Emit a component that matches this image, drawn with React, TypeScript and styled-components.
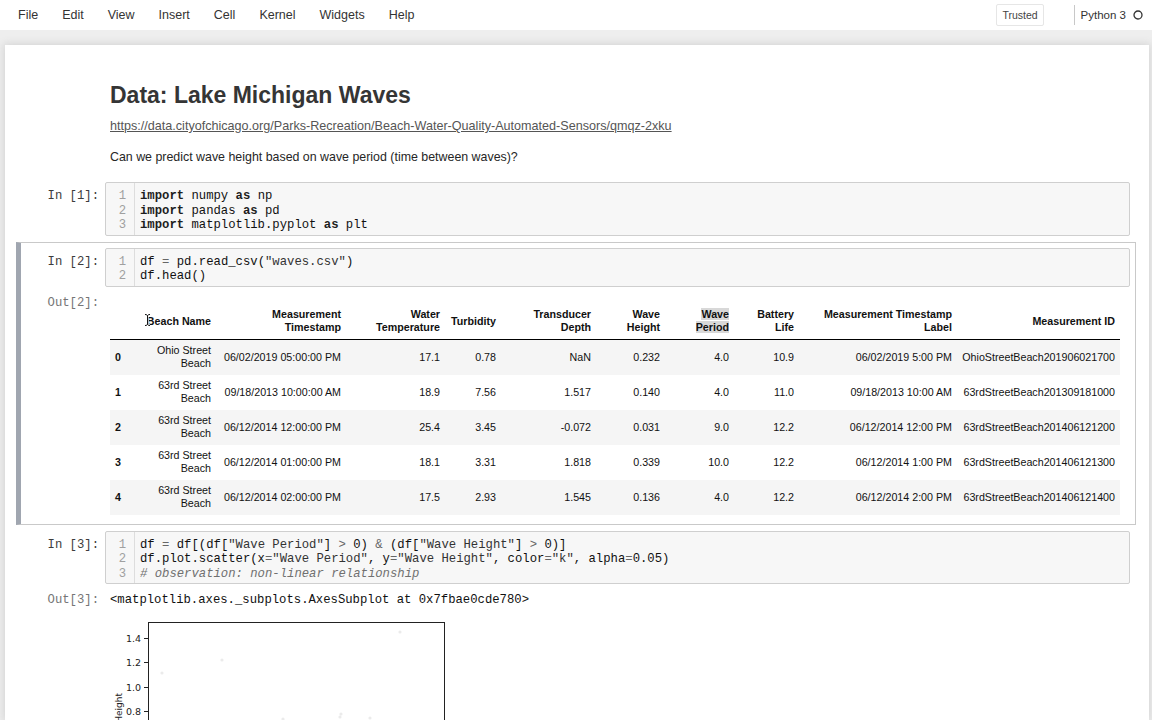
import React from 'react';
import styled, { createGlobalStyle } from 'styled-components';

const GlobalStyle = createGlobalStyle`
  html, body {
    margin: 0;
    padding: 0;
    overflow: hidden;
    background: #eeeeee;
  }
  body {
    font-family: "Liberation Sans", Arial, sans-serif;
    color: #000;
  }
`;

const MONO = `"Liberation Mono", "Courier New", monospace`;

const Page = styled.div`
  width: 1152px;
  height: 720px;
  display: flex;
  flex-direction: column;
  overflow: hidden;
`;

const Header = styled.div`
  height: 30px;
  flex: none;
  background: #fff;
  display: flex;
  align-items: center;
  padding: 0 9px 0 6px;
`;

const Menu = styled.ul`
  list-style: none;
  margin: 0;
  padding: 0;
  display: flex;
`;

const MenuItem = styled.li`
  padding: 0 12px;
  font-size: 12.5px;
  line-height: 30px;
  color: #333;
`;

const StatusArea = styled.div`
  margin-left: auto;
  display: flex;
  align-items: center;
`;

const TrustedBadge = styled.span`
  font-size: 10.5px;
  color: #444;
  border: 1px solid #e6e6e6;
  border-radius: 2px;
  padding: 4px 5px;
  margin-right: 30px;
`;

const KernelName = styled.span`
  display: flex;
  align-items: center;
  gap: 7px;
  height: 20px;
  border-left: 1px solid #c8c8c8;
  padding-left: 6px;
  font-size: 11.5px;
  color: #333;
`;

const Site = styled.div`
  flex: 1;
  min-height: 0;
  padding: 15px 3px 0 5px;
`;

const Notebook = styled.div`
  height: 100%;
  box-sizing: border-box;
  background: #fff;
  padding: 15px 13px 0 11px;
  box-shadow: 0 0 8px 1px rgba(87, 87, 87, 0.18);
`;

const Cell = styled.div<{ $selected?: boolean }>`
  border: 1px solid ${(p) => (p.$selected ? '#c9c9c9' : 'transparent')};
  border-left: ${(p) => (p.$selected ? '5px solid #a0a6b0' : '1px solid transparent')};
  padding: 5px 5px 5px ${(p) => (p.$selected ? '1px' : '5px')};
`;

const Row = styled.div`
  display: flex;
  align-items: flex-start;
`;

const Prompt = styled.div<{ $out?: boolean }>`
  width: 83px;
  flex: none;
  box-sizing: border-box;
  padding: ${(p) => (p.$out ? '9px' : '7px')} 6px 0 0;
  text-align: right;
  font-family: ${MONO};
  font-size: 12.25px;
  line-height: 14.5px;
  white-space: pre;
  color: ${(p) => (p.$out ? '#767676' : '#3c3c3c')};
`;

const MarkdownBody = styled.div`
  flex: 1;
  padding: 5px 5px 4px;
`;

const Title = styled.h1`
  margin: 11px 0 10px;
  font-size: 23px;
  line-height: 26px;
  font-weight: bold;
  color: #353535;
`;

const Paragraph = styled.p<{ $gap?: number }>`
  margin: 0 0 ${(p) => p.$gap ?? 0}px;
  font-size: 12.4px;
  line-height: 17px;
  color: #262626;
`;

const Link = styled.a`
  font-size: 12.6px;
  color: #555;
  text-decoration: underline;
`;

const InputArea = styled.div`
  flex: 1;
  display: flex;
  background: #f7f7f7;
  border: 1px solid #cfcfcf;
  border-radius: 2px;
  font-family: ${MONO};
  font-size: 12.25px;
  line-height: 14.5px;
`;

const Gutter = styled.div`
  width: 29px;
  flex: none;
  box-sizing: border-box;
  padding: 6px 8px 2px 0;
  text-align: right;
  color: #a0a0a0;
  border-right: 1px solid #dddddd;
`;

const CodeLines = styled.div`
  flex: 1;
  padding: 6px 0 2px 5px;
  color: #111;
`;

const CodeLine = styled.div`
  height: 14.5px;
  white-space: pre;
`;

const Kw = styled.span`
  font-weight: bold;
  color: #1e1e1e;
`;

const Str = styled.span`
  color: #333;
`;

const Op = styled.span`
  color: #666;
`;

const Comment = styled.span`
  font-style: italic;
  color: #707070;
`;

const OutputBody = styled.div`
  flex: 1;
  padding: 17px 0 4px 5px;
`;

const TextOutput = styled.pre`
  flex: 1;
  margin: 0;
  padding: 9px 0 0 5px;
  font-family: ${MONO};
  font-size: 12.25px;
  line-height: 14.5px;
  color: #111;
`;

const PlotOutput = styled.div`
  flex: 1;
  padding: 2px 0 0 5px;
`;

const DataTable = styled.table`
  border-collapse: collapse;
  border-spacing: 0;
  table-layout: fixed;
  width: 1010px;
  font-size: 10.7px;
  line-height: 13px;
  color: #111;
`;

const Col = styled.col<{ $w: number }>`
  width: ${(p) => p.$w}px;
`;

const HeadCell = styled.th`
  text-align: right;
  vertical-align: middle;
  padding: 4.5px 5px;
  font-weight: bold;
  border-bottom: 1px solid #000;
`;

const BodyRow = styled.tr`
  &:nth-child(odd) {
    background: #f5f5f5;
  }
`;

const IndexCell = styled.th`
  text-align: left;
  vertical-align: middle;
  padding: 4.5px 5px;
  font-weight: bold;
`;

const DataCell = styled.td`
  text-align: right;
  vertical-align: middle;
  padding: 4.5px 5px;
`;

const Selected = styled.span`
  background: #d8d8d8;
`;

const CursorHolder = styled.span`
  position: relative;
`;

const CursorMark = styled.svg`
  position: absolute;
  left: -3px;
  top: -2px;
`;

const columns = [
  { label: '', w: 30 },
  { label: 'Beach Name', w: 76 },
  { label: 'Measurement Timestamp', w: 130 },
  { label: 'Water Temperature', w: 99 },
  { label: 'Turbidity', w: 56 },
  { label: 'Transducer Depth', w: 95 },
  { label: 'Wave Height', w: 69 },
  { label: 'Wave Period', w: 69 },
  { label: 'Battery Life', w: 65 },
  { label: 'Measurement Timestamp Label', w: 158 },
  { label: 'Measurement ID', w: 163 },
];

const rows = [
  ['0', 'Ohio Street Beach', '06/02/2019 05:00:00 PM', '17.1', '0.78', 'NaN', '0.232', '4.0', '10.9', '06/02/2019 5:00 PM', 'OhioStreetBeach201906021700'],
  ['1', '63rd Street Beach', '09/18/2013 10:00:00 AM', '18.9', '7.56', '1.517', '0.140', '4.0', '11.0', '09/18/2013 10:00 AM', '63rdStreetBeach201309181000'],
  ['2', '63rd Street Beach', '06/12/2014 12:00:00 PM', '25.4', '3.45', '-0.072', '0.031', '9.0', '12.2', '06/12/2014 12:00 PM', '63rdStreetBeach201406121200'],
  ['3', '63rd Street Beach', '06/12/2014 01:00:00 PM', '18.1', '3.31', '1.818', '0.339', '10.0', '12.2', '06/12/2014 1:00 PM', '63rdStreetBeach201406121300'],
  ['4', '63rd Street Beach', '06/12/2014 02:00:00 PM', '17.5', '2.93', '1.545', '0.136', '4.0', '12.2', '06/12/2014 2:00 PM', '63rdStreetBeach201406121400'],
];

const menu = ['File', 'Edit', 'View', 'Insert', 'Cell', 'Kernel', 'Widgets', 'Help'];

function CodeCell({ prompt, lines }: { prompt: string; lines: React.ReactNode[] }) {
  return (
    <Row>
      <Prompt>{prompt}</Prompt>
      <InputArea>
        <Gutter>
          {lines.map((_, i) => (
            <CodeLine key={i}>{i + 1}</CodeLine>
          ))}
        </Gutter>
        <CodeLines>
          {lines.map((l, i) => (
            <CodeLine key={i}>{l}</CodeLine>
          ))}
        </CodeLines>
      </InputArea>
    </Row>
  );
}

function headLabel(label: string) {
  if (label === 'Wave Period') return <Selected>{label}</Selected>;
  if (label === 'Beach Name') {
    return (
      <CursorHolder>
        <CursorMark width="7" height="14" viewBox="0 0 7 14">
          <path d="M1 1.5 C2.5 1.5 3.5 2 3.5 3 V11 C3.5 12 2.5 12.5 1 12.5 M6 1.5 C4.5 1.5 3.5 2 3.5 3 M3.5 11 C3.5 12 4.5 12.5 6 12.5" fill="none" stroke="#fff" strokeWidth="2.4" />
          <path d="M1 1.5 C2.5 1.5 3.5 2 3.5 3 V11 C3.5 12 2.5 12.5 1 12.5 M6 1.5 C4.5 1.5 3.5 2 3.5 3 M3.5 11 C3.5 12 4.5 12.5 6 12.5" fill="none" stroke="#111" strokeWidth="1" />
        </CursorMark>
        {label}
      </CursorHolder>
    );
  }
  return label;
}

function Scatter() {
  const ticks = [
    { y: 28, label: '1.4' },
    { y: 52, label: '1.2' },
    { y: 77, label: '1.0' },
    { y: 101, label: '0.8' },
  ];
  const dots = [
    [52, 63], [112, 50], [290, 22], [230, 107], [173, 109], [260, 108], [231, 104], [200, 112],
  ];
  return (
    <svg width="340" height="116" viewBox="0 0 340 116">
      <rect x="38.5" y="12.5" width="296" height="200" fill="none" stroke="#222" strokeWidth="1" />
      {dots.map(([x, y], i) => (
        <circle key={i} cx={x} cy={y} r="1.6" fill="#000" opacity="0.08" />
      ))}
      {ticks.map((t) => (
        <g key={t.label}>
          <line x1="34" x2="38.5" y1={t.y + 0.5} y2={t.y + 0.5} stroke="#222" strokeWidth="1" />
          <text x="31" y={t.y + 3.5} textAnchor="end" fontSize="9.5" fontFamily="DejaVu Sans, sans-serif" fill="#222">
            {t.label}
          </text>
        </g>
      ))}
      <text transform="translate(11.5,83) rotate(-90)" textAnchor="end" fontSize="9" fontFamily="DejaVu Sans, sans-serif" fill="#222">
        Wave Height
      </text>
    </svg>
  );
}

export default function App() {
  return (
    <Page>
      <GlobalStyle />
      <Header>
        <Menu>
          {menu.map((m) => (
            <MenuItem key={m}>{m}</MenuItem>
          ))}
        </Menu>
        <StatusArea>
          <TrustedBadge>Trusted</TrustedBadge>
          <KernelName>
            Python 3
            <svg width="10" height="10" viewBox="0 0 10 10">
              <circle cx="5" cy="5" r="4" fill="none" stroke="#333" strokeWidth="1.3" />
            </svg>
          </KernelName>
        </StatusArea>
      </Header>
      <Site>
        <Notebook>
          <Cell>
            <Row>
              <Prompt />
              <MarkdownBody>
                <Title>Data: Lake Michigan Waves</Title>
                <Paragraph $gap={14}>
                  <Link href="#">https://data.cityofchicago.org/Parks-Recreation/Beach-Water-Quality-Automated-Sensors/qmqz-2xku</Link>
                </Paragraph>
                <Paragraph>Can we predict wave height based on wave period (time between waves)?</Paragraph>
              </MarkdownBody>
            </Row>
          </Cell>

          <Cell>
            <CodeCell
              prompt="In [1]:"
              lines={[
                <><Kw>import</Kw> numpy <Kw>as</Kw> np</>,
                <><Kw>import</Kw> pandas <Kw>as</Kw> pd</>,
                <><Kw>import</Kw> matplotlib.pyplot <Kw>as</Kw> plt</>,
              ]}
            />
          </Cell>

          <Cell $selected>
            <CodeCell
              prompt="In [2]:"
              lines={[
                <>df <Op>=</Op> pd.read_csv(<Str>"waves.csv"</Str>)</>,
                <>df.head()</>,
              ]}
            />
            <Row>
              <Prompt $out>Out[2]:</Prompt>
              <OutputBody>
                <DataTable>
                  <colgroup>
                    {columns.map((c, i) => (
                      <Col key={i} $w={c.w} />
                    ))}
                  </colgroup>
                  <thead>
                    <tr>
                      {columns.map((c, i) => (
                        <HeadCell key={i}>{headLabel(c.label)}</HeadCell>
                      ))}
                    </tr>
                  </thead>
                  <tbody>
                    {rows.map((r) => (
                      <BodyRow key={r[0]}>
                        <IndexCell>{r[0]}</IndexCell>
                        {r.slice(1).map((v, i) => (
                          <DataCell key={i}>{v}</DataCell>
                        ))}
                      </BodyRow>
                    ))}
                  </tbody>
                </DataTable>
              </OutputBody>
            </Row>
          </Cell>

          <Cell>
            <CodeCell
              prompt="In [3]:"
              lines={[
                <>df <Op>=</Op> df[(df[<Str>"Wave Period"</Str>] <Op>&gt;</Op> 0) <Op>&amp;</Op> (df[<Str>"Wave Height"</Str>] <Op>&gt;</Op> 0)]</>,
                <>df.plot.scatter(x<Op>=</Op><Str>"Wave Period"</Str>, y<Op>=</Op><Str>"Wave Height"</Str>, color<Op>=</Op><Str>"k"</Str>, alpha<Op>=</Op>0.05)</>,
                <Comment># observation: non-linear relationship</Comment>,
              ]}
            />
            <Row>
              <Prompt $out>Out[3]:</Prompt>
              <TextOutput>{'<matplotlib.axes._subplots.AxesSubplot at 0x7fbae0cde780>'}</TextOutput>
            </Row>
            <Row>
              <Prompt />
              <PlotOutput>
                <Scatter />
              </PlotOutput>
            </Row>
          </Cell>
        </Notebook>
      </Site>
    </Page>
  );
}
